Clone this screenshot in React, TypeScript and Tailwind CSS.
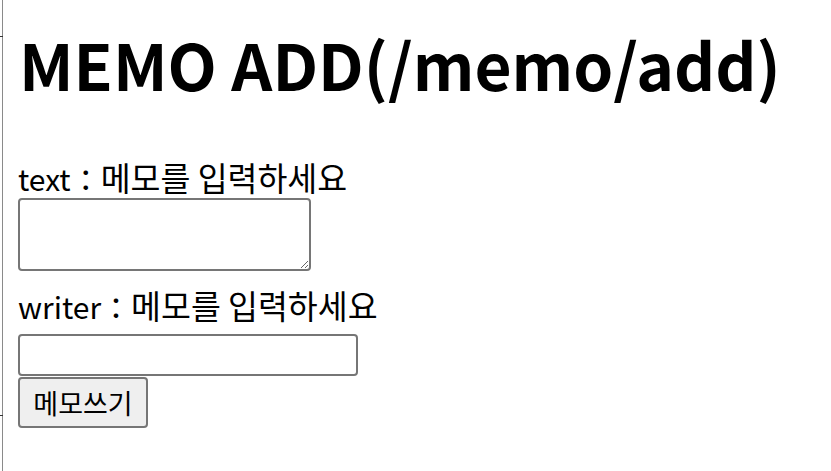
import React from "react";

export default function App() {
  return (
    <div className="relative h-[471px] w-[831px] overflow-hidden bg-white font-['Noto_Sans_CJK_KR','Noto_Sans',sans-serif] text-black">
      <div className="absolute left-0 top-[36px] h-px w-[3px] bg-[#333]" />
      <div className="absolute left-0 top-[415px] h-px w-[3px] bg-[#333]" />
      <div className="ml-[2px] flex h-[471px] flex-col items-start border-l border-[#8a8a8a] pl-[15px] pt-[31px]">
        <h1 className="ml-[1px] text-[64px] font-bold leading-[64px]">MEMO ADD(/memo/add)</h1>
        <form className="flex flex-col items-start">
          <div className="mt-[61px] h-[42px] text-[30px] leading-[42px]">
            text：<span className="text-[32.5px]">메모를 입력하세요</span>
          </div>
          <textarea className="block h-[73px] w-[293px] rounded-[4px] border-2 border-[#767676] bg-white" />
          <div className="mt-[13px] h-[42px] text-[30px] leading-[42px]">
            writer：<span className="text-[32.5px]">메모를 입력하세요</span>
          </div>
          <input type="text" className="mt-[8px] block h-[42px] w-[340px] rounded-[4px] border-2 border-[#767676] bg-white" />
          <button type="button" className="mt-[1px] block h-[51px] w-[130px] rounded-[4px] border-2 border-[#767676] bg-[#efefef] text-[27px] leading-none">
            메모쓰기
          </button>
        </form>
      </div>
    </div>
  );
}
